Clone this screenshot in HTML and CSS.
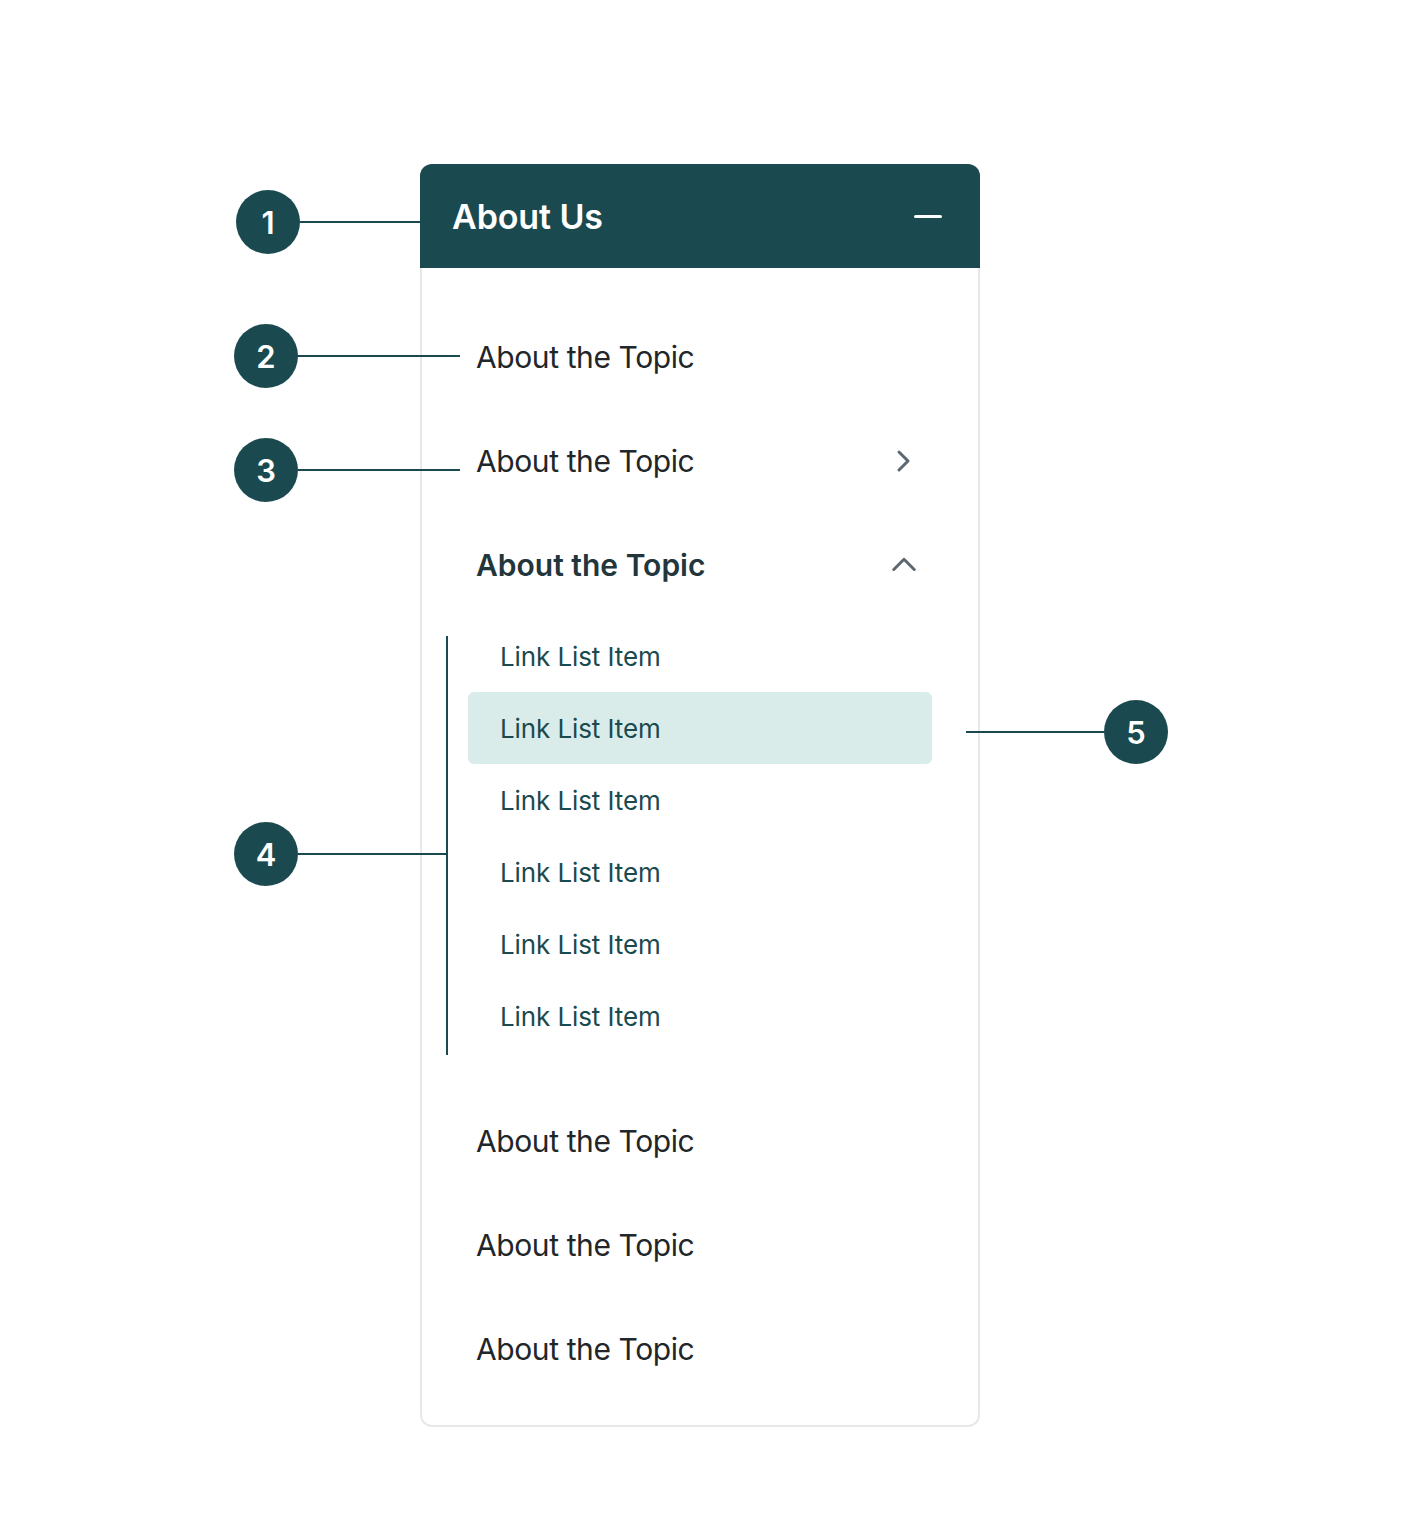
FILE: index.html
```html
<!DOCTYPE html>
<html lang="en">
<head>
<meta charset="utf-8">
<title>Accordion nav anatomy</title>
<link rel="stylesheet" href="styles.css">
</head>
<body>
<div class="stage">
  <nav class="card">
    <div class="card-head">
      <span class="card-title">About Us</span>
      <span class="minus"></span>
    </div>
    <div class="card-body">
      <div class="row"><span class="row-label">About the Topic</span></div>
      <div class="row"><span class="row-label">About the Topic</span>
        <svg class="icon" viewBox="0 0 24 24" width="24" height="24"><path d="M7 3 L16 12 L7 21" fill="none" stroke="#5d6870" stroke-width="3" stroke-linecap="round" stroke-linejoin="round"/></svg>
      </div>
      <div class="row open"><span class="row-label">About the Topic</span>
        <svg class="icon" viewBox="0 0 24 24" width="24" height="24"><path d="M1.8 16.5 L12 6.3 L22.2 16.5" fill="none" stroke="#5d6870" stroke-width="3" stroke-linecap="round" stroke-linejoin="round"/></svg>
      </div>
      <div class="sub">
        <div class="sub-line"></div>
        <ul class="links">
          <li class="link">Link List Item</li>
          <li class="link active">Link List Item</li>
          <li class="link">Link List Item</li>
          <li class="link">Link List Item</li>
          <li class="link">Link List Item</li>
          <li class="link">Link List Item</li>
        </ul>
      </div>
      <div class="row"><span class="row-label">About the Topic</span></div>
      <div class="row"><span class="row-label">About the Topic</span></div>
      <div class="row"><span class="row-label">About the Topic</span></div>
    </div>
  </nav>

  <div class="callout c1"><span class="dot">1</span><span class="leader"></span></div>
  <div class="callout c2"><span class="dot">2</span><span class="leader"></span></div>
  <div class="callout c3"><span class="dot">3</span><span class="leader"></span></div>
  <div class="callout c4"><span class="dot">4</span><span class="leader"></span></div>
  <div class="callout c5 rev"><span class="leader"></span><span class="dot">5</span></div>
</div>
</body>
</html>
```

FILE: styles.css
```css
* { box-sizing: border-box; }
html, body { margin: 0; padding: 0; background: #ffffff; }
body {
  font-family: Inter, "Liberation Sans", Arial, sans-serif;
  color: #222629;
}
.stage {
  position: relative;
  width: 1424px;
  min-height: 1532px;
  padding: 164px 0 0 420px;
}
.card { width: 560px; }
.card-head {
  height: 104px;
  background: #1a4a4f;
  border-radius: 12px 12px 0 0;
  display: flex;
  align-items: center;
  justify-content: space-between;
  padding: 0 38px 0 32px;
}
.card-title {
  color: #ffffff;
  font-size: 34px;
  font-weight: 600;
  letter-spacing: -0.1px;
}
.minus {
  width: 28px;
  height: 3px;
  border-radius: 2px;
  background: #ffffff;
}
.card-body {
  border: 2px solid #e8e8e8;
  border-top: none;
  border-radius: 0 0 12px 12px;
  padding: 37px 0 24px;
}
.row {
  height: 104px;
  display: flex;
  align-items: center;
  justify-content: space-between;
  padding: 0 62px 0 54px;
}
.row-label {
  font-size: 30px;
  font-weight: 400;
  letter-spacing: -0.4px;
  color: #222629;
}
.row.open .row-label { font-weight: 600; letter-spacing: 0; color: #22363b; }
.icon { display: block; }
.sub {
  display: flex;
  margin: 3px 46px 34px 24px;
}
.sub-line {
  width: 2px;
  background: #1a4a4f;
  margin-top: 16px;
  margin-right: 20px;
}
.links {
  list-style: none;
  margin: 0 0 3px;
  padding: 0;
  flex: 1;
}
.link {
  height: 72px;
  display: flex;
  align-items: center;
  padding-left: 32px;
  font-size: 26px;
  letter-spacing: -0.1px;
  color: #1a4a4f;
  border-radius: 6px;
}
.link.active { background: #d9ecea; }

.callout {
  position: absolute;
  display: flex;
  align-items: center;
}
.dot {
  width: 64px;
  height: 64px;
  border-radius: 50%;
  background: #1a4a4f;
  color: #ffffff;
  font-size: 31px;
  font-weight: 600;
  display: flex;
  align-items: center;
  justify-content: center;
}
.leader {
  height: 2px;
  background: #1a4a4f;
}
.c1 { left: 236px; top: 190px; }
.c1 .leader { width: 120px; }
.c2 { left: 234px; top: 324px; }
.c2 .leader { width: 162px; }
.c3 { left: 234px; top: 438px; }
.c3 .leader { width: 162px; }
.c4 { left: 234px; top: 822px; }
.c4 .leader { width: 148px; }
.c5 { left: 966px; top: 700px; }
.c5 .leader { width: 138px; }
```
